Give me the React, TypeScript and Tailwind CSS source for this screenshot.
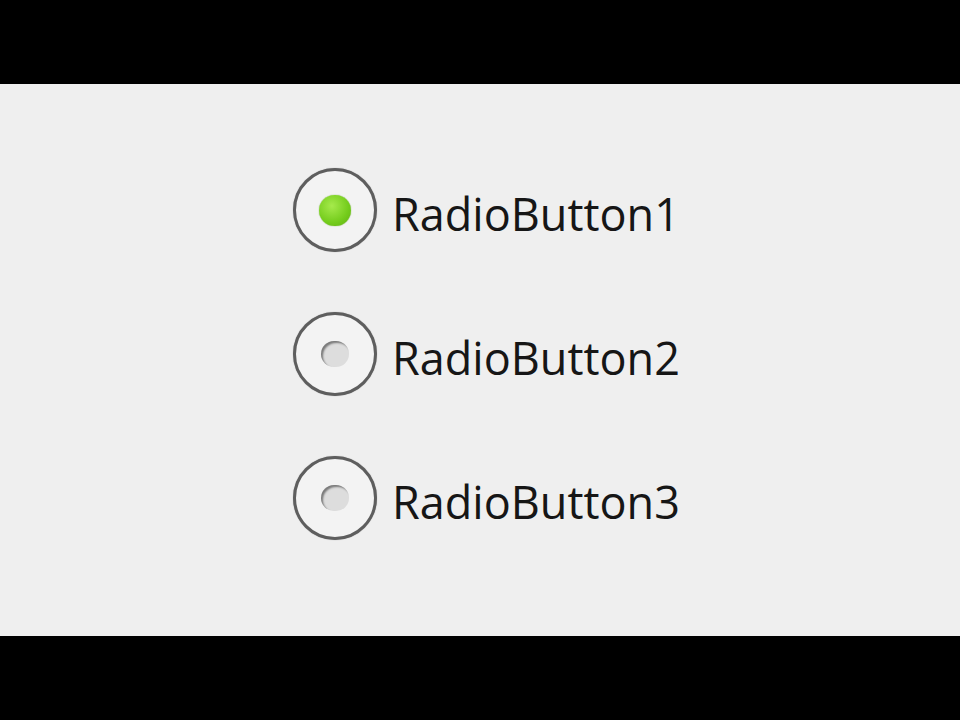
import React from 'react'

const items = [
  { id: 1, label: 'RadioButton1', checked: true },
  { id: 2, label: 'RadioButton2', checked: false },
  { id: 3, label: 'RadioButton3', checked: false },
]

function Radio({ checked }: { checked: boolean }) {
  return (
    <div className="w-[84px] h-[84px] shrink-0 rounded-full border-[3px] border-[#5e5e5e] bg-[#f3f3f3] flex items-center justify-center shadow-[0_0_1px_rgba(0,0,0,0.4)]">
      {checked ? (
        <div className="w-[32px] h-[31px] rounded-full bg-[radial-gradient(circle_at_40%_35%,#a6ea4c,#74cc1c_60%,#5fae12)] shadow-[0_0_1px_#4d8f0e]" />
      ) : (
        <div className="w-[28px] h-[26px] rounded-full bg-[#dddddd] shadow-[inset_2px_2px_2px_rgba(0,0,0,0.45)]" />
      )}
    </div>
  )
}

export default function App() {
  return (
    <div className="w-[960px] h-[720px] bg-black flex flex-col" style={{ fontFamily: '"Open Sans", "Noto Sans", sans-serif' }}>
      <div className="h-[84px] shrink-0" />
      <div className="h-[552px] bg-[#efefef] pl-[293px] pt-[84px] flex flex-col gap-[60px]">
        {items.map((item) => (
          <div key={item.id} className="flex items-center">
            <Radio checked={item.checked} />
            <span className="ml-[15px] pt-[8px] text-[45px] leading-[44px] font-[500] text-[#161616]">{item.label}</span>
          </div>
        ))}
      </div>
      <div className="flex-1" />
    </div>
  )
}
